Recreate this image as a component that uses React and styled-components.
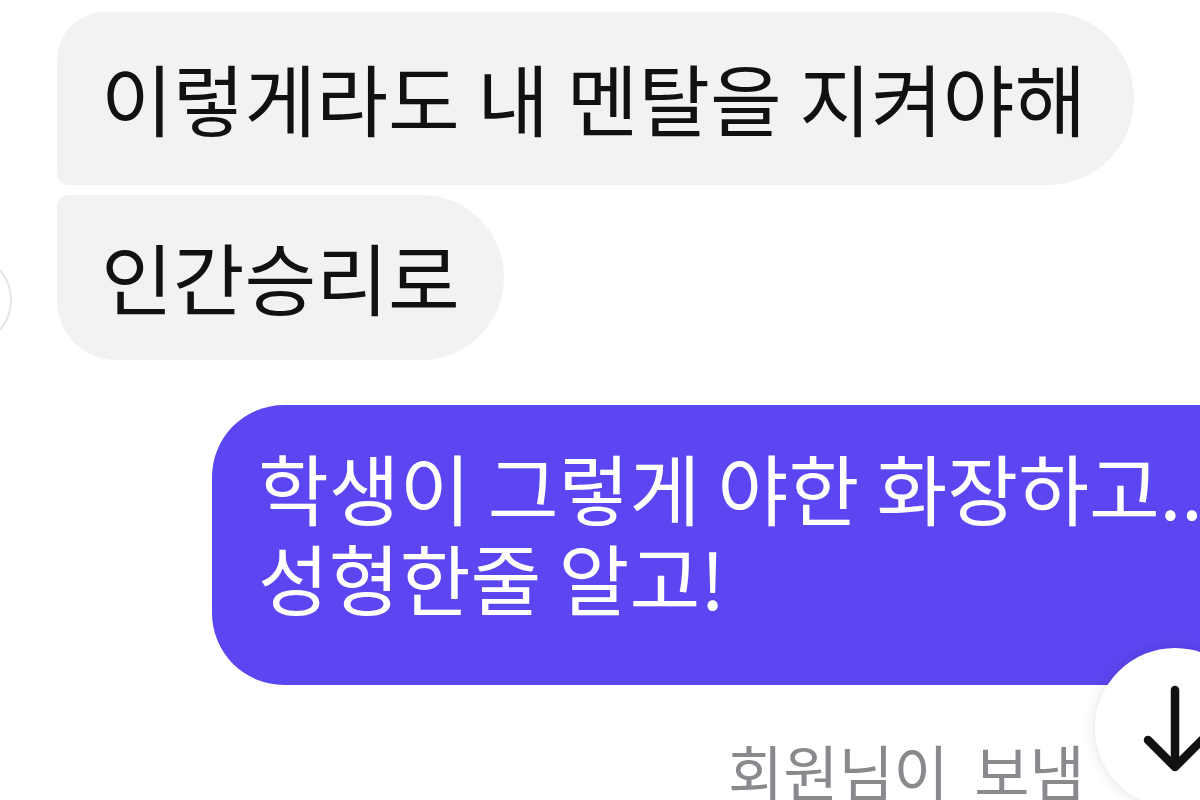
import React from "react";
import styled, { createGlobalStyle } from "styled-components";

const Global = createGlobalStyle`
  html, body { margin: 0; padding: 0; background: #ffffff; }
  body { font-family: "Noto Sans CJK KR", "Noto Sans", sans-serif; }
`;

const Page = styled.div`
  position: relative;
  width: 1200px;
  height: 800px;
  overflow: hidden;
  background: #ffffff;
`;

const Thread = styled.div`
  display: flex;
  flex-direction: column;
  padding-top: 12px;
`;

const IncomingGroup = styled.div`
  display: flex;
  align-items: flex-end;
  gap: 45px;
  margin-left: -80px;
`;

const Avatar = styled.div`
  flex: none;
  width: 88px;
  height: 88px;
  border-radius: 50%;
  border: 2px solid #e4e4e6;
  background: #ffffff;
  margin-bottom: 14px;
`;

const BubbleStack = styled.div`
  display: flex;
  flex-direction: column;
  align-items: flex-start;
  gap: 10px;
`;

const InBubble = styled.div`
  background: #f2f2f5;
  color: #111111;
  font-size: 78px;
  line-height: 96px;
  padding: ${(p) => (p.$first ? "37px 48px 40px 44px" : "33px 44px 36px 44px")};
  border-radius: ${(p) => (p.$first ? "48px 86px 86px 12px" : "12px 84px 84px 60px")};
  white-space: nowrap;
`;

const OutRow = styled.div`
  display: flex;
  justify-content: flex-start;
  margin-top: 45px;
  padding-left: 212px;
`;

const OutBubble = styled.div`
  flex: none;
  background: #5b46f1;
  color: #ffffff;
  font-size: 77px;
  line-height: 90px;
  padding: 37px 70px 63px 46px;
  border-radius: 72px;
  white-space: nowrap;
`;

const Status = styled.div`
  display: flex;
  justify-content: flex-start;
  margin-top: 50px;
  padding-left: 728px;
  color: #8a8a8e;
  font-size: 60px;
  line-height: 70px;
  word-spacing: 12px;
  white-space: nowrap;
`;

const ScrollDown = styled.button`
  position: absolute;
  left: 1095px;
  top: 648px;
  width: 160px;
  height: 160px;
  border-radius: 50%;
  border: none;
  padding: 0;
  background: #ffffff;
  box-shadow: 0 0 14px rgba(0, 0, 0, 0.12);
  display: flex;
  align-items: flex-start;
  justify-content: flex-start;
`;

const Arrow = styled.svg`
  display: block;
  margin-left: 40px;
  margin-top: 36px;
`;

export default function App() {
  return (
    <Page>
      <Global />
      <Thread>
        <IncomingGroup>
          <Avatar />
          <BubbleStack>
            <InBubble $first>이렇게라도 내 멘탈을 지켜야해</InBubble>
            <InBubble>인간승리로</InBubble>
          </BubbleStack>
        </IncomingGroup>
        <OutRow>
          <OutBubble>
            학생이 그렇게 야한 화장하고..
            <br />
            성형한줄 알고!
          </OutBubble>
        </OutRow>
        <Status>회원님이 보냄</Status>
      </Thread>
      <ScrollDown aria-label="scroll down">
        <Arrow width="80" height="90" viewBox="0 0 80 90" fill="none">
          <path
            d="M40 6 V82 M13 56 L40 83 L67 56"
            stroke="#111111"
            strokeWidth="8.5"
            strokeLinecap="round"
            strokeLinejoin="round"
          />
        </Arrow>
      </ScrollDown>
    </Page>
  );
}
